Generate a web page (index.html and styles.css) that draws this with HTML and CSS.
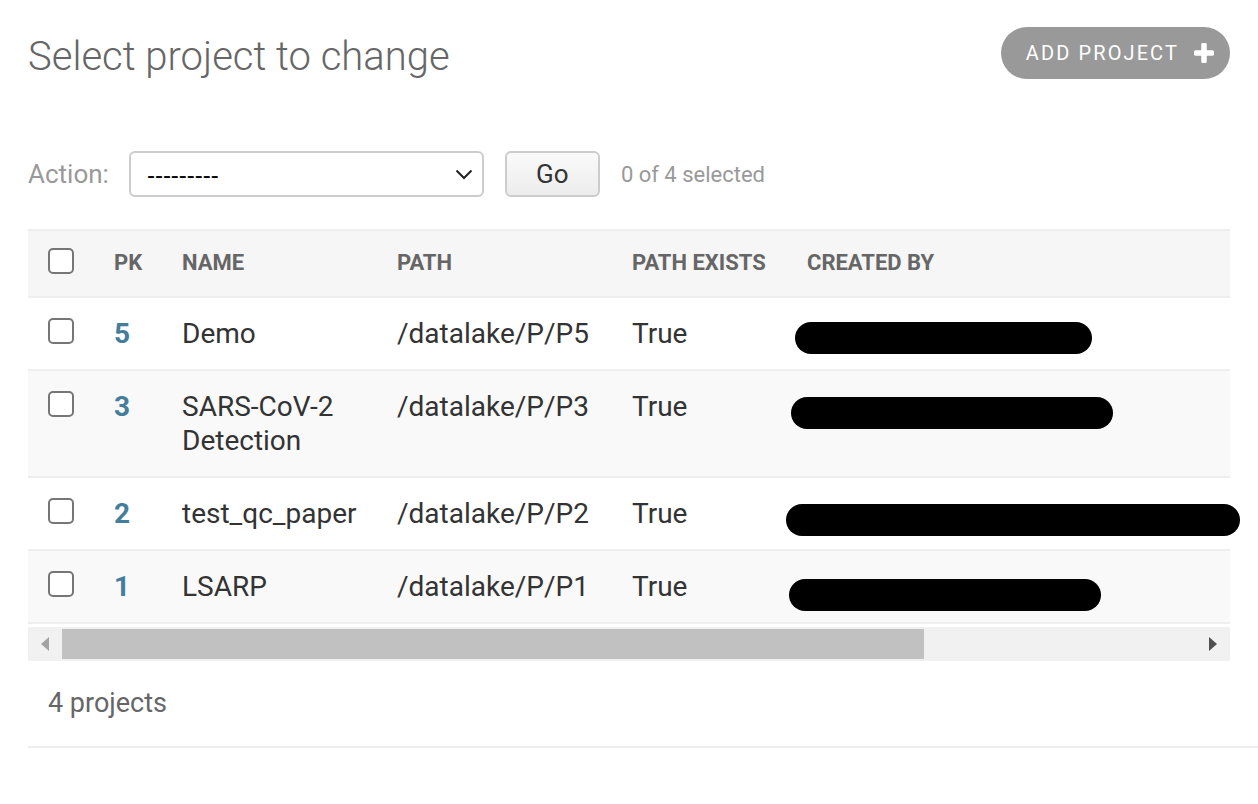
FILE: index.html
```html
<!DOCTYPE html>
<html lang="en">
<head>
<meta charset="utf-8">
<title>Select project to change</title>
<link rel="stylesheet" href="styles.css">
</head>
<body>
<div class="content">
  <div class="top">
    <h1 class="title">Select project to change</h1>
    <a class="addlink" href="#">ADD PROJECT
      <svg class="plus" width="20" height="20" viewBox="0 0 20 20"><path d="M10 2v16M2 10h16" stroke="#fff" stroke-width="5.5" stroke-linecap="round" fill="none"/></svg>
    </a>
  </div>

  <div class="actions">
    <label class="action-label">Action:</label>
    <div class="select-wrap">
      <select class="action-select"><option>---------</option></select>
      <svg class="chevron" width="18" height="11" viewBox="0 0 18 11"><path d="M1.5 1.5L9 9l7.5-7.5" stroke="#222" stroke-width="2" fill="none"/></svg>
    </div>
    <button class="go">Go</button>
    <span class="counter">0 of 4 selected</span>
  </div>

  <div class="results">
    <table class="result-list">
      <colgroup>
        <col class="c-check"><col class="c-pk"><col class="c-name"><col class="c-path"><col class="c-exists"><col class="c-by">
      </colgroup>
      <thead>
        <tr>
          <th><input class="cb" type="checkbox"></th>
          <th>PK</th>
          <th>NAME</th>
          <th>PATH</th>
          <th>PATH EXISTS</th>
          <th>CREATED BY</th>
        </tr>
      </thead>
      <tbody>
        <tr class="odd">
          <td><input class="cb" type="checkbox"></td>
          <th><a href="#">5</a></th>
          <td>Demo</td>
          <td>/datalake/P/P5</td>
          <td>True</td>
          <td><span class="redact r1"></span></td>
        </tr>
        <tr class="even">
          <td><input class="cb" type="checkbox"></td>
          <th><a href="#">3</a></th>
          <td>SARS-CoV-2 Detection</td>
          <td>/datalake/P/P3</td>
          <td>True</td>
          <td><span class="redact r2"></span></td>
        </tr>
        <tr class="odd">
          <td><input class="cb" type="checkbox"></td>
          <th><a href="#">2</a></th>
          <td>test_qc_paper</td>
          <td>/datalake/P/P2</td>
          <td>True</td>
          <td><span class="redact r3"></span></td>
        </tr>
        <tr class="even">
          <td><input class="cb" type="checkbox"></td>
          <th><a href="#">1</a></th>
          <td>LSARP</td>
          <td>/datalake/P/P1</td>
          <td>True</td>
          <td><span class="redact r4"></span></td>
        </tr>
      </tbody>
    </table>
    <div class="hscroll">
      <div class="sb-btn"><svg width="10" height="16" viewBox="0 0 10 16"><path d="M9 1v14L1 8z" fill="#a3a3a3"/></svg></div>
      <div class="sb-track"><div class="sb-thumb"></div></div>
      <div class="sb-btn"><svg width="10" height="16" viewBox="0 0 10 16"><path d="M1 1v14l8-7z" fill="#505050"/></svg></div>
    </div>
  </div>

  <p class="paginator">4 projects</p>
</div>
</body>
</html>
```

FILE: styles.css
```css
html, body {
  margin: 0;
  padding: 0;
  background: #fff;
}

body {
  font-family: Roboto, "Liberation Sans", Arial, sans-serif;
  color: #333;
}

.content {
  padding: 0 28px;
}

.top {
  display: flex;
  justify-content: space-between;
  align-items: flex-start;
  padding-top: 27px;
}

.title {
  margin: 6px 0 0;
  font-size: 40px;
  line-height: 48px;
  font-weight: 300;
  color: #666;
}

.addlink {
  display: flex;
  align-items: center;
  gap: 15px;
  height: 52px;
  box-sizing: border-box;
  padding: 0 16px 0 25px;
  border-radius: 26px;
  background: #999;
  color: #fff;
  text-decoration: none;
  font-size: 20px;
  letter-spacing: 2.1px;
  line-height: 52px;
}

.plus {
  display: block;
}

.actions {
  display: flex;
  align-items: center;
  margin-top: 70px;
  height: 46px;
}

.action-label {
  font-size: 26px;
  color: #999;
  margin-right: 20px;
}

.select-wrap {
  position: relative;
  width: 355px;
  height: 46px;
}

.action-select {
  -webkit-appearance: none;
  appearance: none;
  width: 100%;
  height: 46px;
  box-sizing: border-box;
  border: 2px solid #ccc;
  border-radius: 6px;
  background: #fff;
  padding: 0 16px;
  font-family: "Liberation Sans", Arial, sans-serif;
  font-size: 24px;
  color: #000;
  margin: 0;
}

.chevron {
  position: absolute;
  right: 11px;
  top: 18px;
  pointer-events: none;
}

.go {
  margin-left: 21px;
  width: 95px;
  height: 46px;
  box-sizing: border-box;
  border: 2px solid #ccc;
  border-radius: 6px;
  background: linear-gradient(#fafafa, #ececec);
  font-family: Roboto, sans-serif;
  font-size: 26px;
  color: #333;
  padding: 0;
}

.counter {
  margin-left: 21px;
  font-size: 22px;
  color: #999;
}

.results {
  margin-top: 32px;
  width: 1202px;
}

.result-list {
  width: 1202px;
  table-layout: fixed;
  border-collapse: collapse;
}

.c-check { width: 70px; }
.c-pk { width: 68px; }
.c-name { width: 215px; }
.c-path { width: 235px; }
.c-exists { width: 175px; }
.c-by { width: 439px; }

.result-list thead th {
  background: #f6f6f6;
  border-top: 2px solid #eee;
  border-bottom: 2px solid #eee;
  padding: 16px 16px 17px;
  font-size: 22px;
  line-height: 32px;
  font-weight: 700;
  color: #666;
  text-align: left;
  vertical-align: top;
  white-space: nowrap;
}

.result-list tbody td,
.result-list tbody th {
  padding: 19px 16px 18px;
  font-size: 28px;
  line-height: 34px;
  font-weight: 400;
  color: #333;
  text-align: left;
  vertical-align: top;
  border-bottom: 2px solid #eee;
}

.result-list tbody th a {
  color: #447e9b;
  font-weight: 700;
  text-decoration: none;
}

.result-list tr.even td,
.result-list tr.even th {
  background: #f9f9f9;
}

.cb {
  -webkit-appearance: none;
  appearance: none;
  display: block;
  width: 26px;
  height: 26px;
  margin: 1px 0 0 4px;
  box-sizing: border-box;
  border: 2px solid #767676;
  border-radius: 5px;
  background: #fff;
}

.redact {
  display: block;
  height: 32px;
  border-radius: 16px;
  background: #000;
}

.r1 { width: 297px; margin: 5px 0 -3px -12px; }
.r2 { width: 322px; margin: 7px 0 -5px -16px; }
.r3 { width: 454px; margin: 7px 0 -5px -21px; }
.r4 { width: 312px; margin: 9px 0 -7px -18px; }

.hscroll {
  display: flex;
  height: 34px;
  margin-top: 3px;
  background: #f1f1f1;
}

.sb-btn {
  width: 34px;
  display: flex;
  align-items: center;
  justify-content: center;
}

.sb-track {
  flex: 1;
  padding: 2px 0;
}

.sb-thumb {
  width: 862px;
  height: 30px;
  background: #c1c1c1;
}

.paginator {
  margin: 0 -28px 0 0;
  padding: 26px 0 27px 20px;
  font-size: 27px;
  line-height: 32px;
  color: #666;
  border-bottom: 2px solid #eee;
}
```
